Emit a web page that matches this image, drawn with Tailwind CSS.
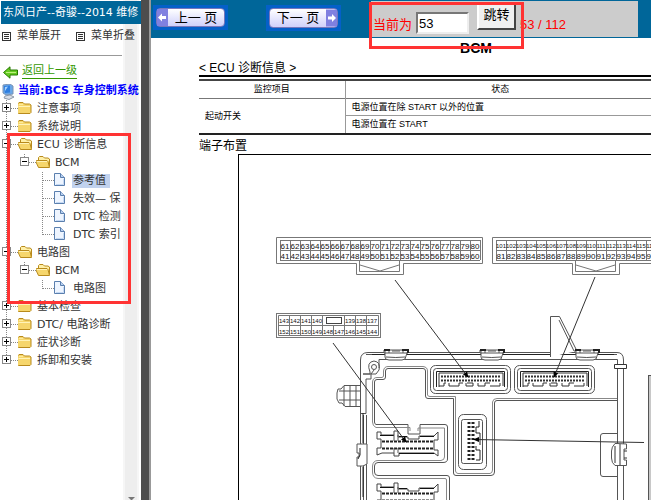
<!DOCTYPE html>
<html lang="zh-CN">
<head>
  <meta charset="UTF-8" />
  <meta name="viewport" content="width=device-width, initial-scale=1.0" />
  <title>东风日产--奇骏--2014 维修</title>
  <script src="https://cdn.jsdelivr.net/npm/@tailwindcss/browser@4"></script>
</head>
<body class="relative flex h-screen overflow-hidden bg-white font-['Liberation_Sans','Noto_Sans_CJK_SC',sans-serif] text-black">

  <!-- Shared symbols for the tree -->
  <svg class="hidden">
    <symbol id="line" viewBox="0 0 18 18"><path d="M6.5 0V18" stroke="#888" stroke-dasharray="1 1" /></symbol>
    <symbol id="tee" viewBox="0 0 18 18"><path d="M6.5 0V18M7 8.5H18" stroke="#888" stroke-dasharray="1 1" /></symbol>
    <symbol id="elbow" viewBox="0 0 18 18"><path d="M6.5 0V9M7 8.5H18" stroke="#888" stroke-dasharray="1 1" /></symbol>
    <symbol id="plus" viewBox="0 0 18 18">
      <rect x="2.5" y="3.5" width="8" height="8" fill="#fff" stroke="#888" />
      <path d="M4 7.5H9M6.5 5V10" stroke="#000" />
    </symbol>
    <symbol id="minus" viewBox="0 0 18 18">
      <rect x="2.5" y="3.5" width="8" height="8" fill="#fff" stroke="#888" />
      <path d="M4 7.5H9" stroke="#000" />
    </symbol>
    <symbol id="folder" viewBox="0 0 18 18">
      <path d="M-.5 12.5V4L1 2.5H5L6.5 4H11.5L13 5V12.5L12 13.5H.5Z" fill="#f6d66c" stroke="#b88a1c" />
      <path d="M.5 6.5H12" stroke="#fff3b8" />
      <path d="M1 4.5H5" stroke="#fdeb9c" />
    </symbol>
    <symbol id="folder-open" viewBox="0 0 18 18">
      <path d="M2.5 12.5V3.5L3.5 2.5H7L8.5 4H12L13.5 5V12.5" fill="#fff0a8" stroke="#b88a1c" />
      <path d="M-.5 7L.5 6.5H11L12 7.5L13.5 13.5H2.5Z" fill="#f6d66c" stroke="#b88a1c" />
      <path d="M1 7.5H11" stroke="#fff3b8" />
    </symbol>
    <symbol id="file" viewBox="0 0 18 18">
      <path d="M.5 1.5H6.5L10.5 5.5V13.5H.5Z" fill="#eef5ff" stroke="#5a7fae" />
      <path d="M6.5 1.5V5.5H10.5" fill="#b8d0f0" stroke="#5a7fae" />
      <path d="M2 12.5H9.5V7" fill="none" stroke="#c4d9f4" />
    </symbol>
    <symbol id="list" viewBox="0 0 9 9">
      <rect x=".5" y=".5" width="8" height="8" fill="#fff" stroke="#333" />
      <path d="M2 2.5H7M2 4.5H7M2 6.5H7" stroke="#333" />
    </symbol>
  </svg>

  <!-- Menu -->
  <aside class="relative w-[141px] shrink-0 overflow-hidden font-['DejaVu_Sans','Noto_Sans_CJK_SC',sans-serif] text-[11px] whitespace-nowrap text-[#333]">
    <div class="absolute inset-y-0 left-[123px] -z-10 w-4 border-x-2 border-[#f6f6f6] bg-[#eee]">
      <svg class="absolute bottom-0 left-[3px] h-[3px] w-[7px]" viewBox="0 0 7 3"><path d="M0 0H7L4 3H3Z" fill="#777" /></svg>
    </div>

    <h1 class="mt-px ml-px h-[23px] overflow-hidden bg-[#006699] pl-[2px] leading-[23px] text-white">东风日产--奇骏--2014 维修</h1>
    <div class="flex h-6 items-center pl-[2px]">
      <button class="flex w-[74px] items-center gap-[6px]"><svg class="size-[9px]"><use href="#list" /></svg>菜单展开</button>
      <button class="flex items-center gap-[6px]"><svg class="size-[9px]"><use href="#list" /></svg>菜单折叠</button>
    </div>
    <hr class="mt-[7px] w-[122px] border-[#999]" />

    <a href="#" class="mt-[7px] flex h-4 items-center gap-1 pl-[3px] text-[#339900]">
      <svg class="mt-[3px] h-[13px] w-[15px]" viewBox="0 0 15 13"><path d="M.5 6.5L7 .8V4H14.5V9H7V12.2Z" fill="#66cc22" stroke="#267a00" /><path d="M3 6.5H13" stroke="#bdf07c" /></svg>
      <span class="border-b border-[#339900] leading-[15px]">返回上一级</span>
    </a>
    <div class="mt-1 flex h-[17px] items-center gap-[3px] pl-[1px] font-bold text-[#0000ff]">
      <svg class="h-4 w-[14px] shrink-0" viewBox="0 0 14 16">
        <path d="M2 1L9 0L12 2V10L5 11L2 9Z" fill="#6aa7e8" stroke="#7b94b5" />
        <path d="M3 2L9 1.5V8.5L4 9Z" fill="#2f7fe0" />
        <path d="M4 3L7 2.5L4 7Z" fill="#a8d4ff" />
        <path d="M4 12L9 11L13 13L8 15.5L3 14Z" fill="#d8dde6" stroke="#8b97a8" />
      </svg>
      <span>当前:BCS 车身控制系统</span>
    </div>

    <ul id="tree" class="w-[122px] overflow-hidden"></ul>
  </aside>

  <!-- Splitter -->
  <div class="w-[10px] shrink-0 border-r-2 border-[#999] bg-[#4d4d4d]"></div>

  <main class="min-w-0 flex-1">
    <!-- Pager -->
    <form class="flex h-[38px] items-start bg-[#006699] text-[13px] text-[#ff0000]">
      <button type="button" class="mt-[5px] ml-[2px] h-[25px] w-[75px] shrink-0 border-[3px] border-[#0560c8] bg-[#0560c8]">
        <span class="flex h-[19px] items-center rounded-sm border border-[#7777bb] bg-linear-to-b from-white to-[#d0d0fa] text-[13px] text-black">
          <svg class="h-full w-[11px]" viewBox="0 0 11 17"><path d="M0 0H11V17H0Z" fill="#8080e0" /><path d="M1 8.5L5 4.5V7H9V10H5V12.5Z" fill="#fff" /></svg>
          <span class="flex-1">上一 页</span>
        </span>
      </button>
      <button type="button" class="mt-[5px] ml-[38px] h-[26px] w-[75px] shrink-0 border-[3px] border-[#0560c8] bg-[#0560c8]">
        <span class="flex h-5 items-center rounded-sm border border-[#7777bb] bg-linear-to-b from-white to-[#d0d0fa] text-[13px] text-black">
          <span class="flex-1">下一 页</span>
          <svg class="h-full w-[11px]" viewBox="0 0 11 17"><path d="M0 0H11V17H0Z" fill="#8080e0" /><path d="M10 8.5L6 4.5V7H2V10H6V12.5Z" fill="#fff" /></svg>
        </span>
      </button>
      <div class="mt-px ml-[30px] flex h-9 w-[267px] shrink-0 items-start bg-[#ccc] pl-[2px]">
        <label for="page" class="mt-[14px] leading-5">当前为</label>
        <input id="page" type="text" value="53" class="mt-[11px] ml-1 h-[22px] w-[53px] border-2 border-t-[#777] border-r-[#eee] border-b-[#eee] border-l-[#777] bg-white px-px text-black" />
        <button type="button" class="mt-[2px] ml-2 h-[27px] w-[39px] border-2 border-t-white border-r-[#444] border-b-[#444] border-l-white bg-[#f0f0f0] pb-1 leading-5 text-black">跳转</button>
        <span class="mt-[14px] ml-1 leading-5">53 / 112</span>
      </div>
    </form>

    <!-- Manual page -->
    <article class="-mr-1 pl-12">
      <h2 class="mt-px pl-[97px] text-center text-[14px] leading-[18px] font-bold"><span class="block w-[360px]">BCM</span></h2>
      <h3 class="mt-1 h-[14px] text-[12px] leading-[14px]">&lt; ECU 诊断信息 &gt;</h3>
      <div class="h-[4px] border-t-2 border-black"></div>
      <table class="w-full table-fixed border-y-2 border-t-[#444] border-b-[#222] text-[9px] leading-[17px]">
        <thead>
          <tr class="border-b border-[#777]">
            <th class="w-[146px] border-r border-[#999] font-normal">监控项目</th>
            <th class="font-normal">状态</th>
          </tr>
        </thead>
        <tbody>
          <tr>
            <td rowspan="2" class="border-r border-[#999] pl-[6px]">起动开关</td>
            <td class="border-b border-[#999] pl-[6px] leading-4">电源位置在除 START 以外的位置</td>
          </tr>
          <tr><td class="pl-[6px]">电源位置在 START</td></tr>
        </tbody>
      </table>
      <h3 class="mt-[3px] text-[12px] leading-4">端子布置</h3>

      <figure class="ml-[39px] border-t border-l border-black">
        <svg class="h-[346px] w-[440px] max-w-none" viewBox="239 155 440 346" fill="none" stroke="#555" role="img" aria-label="端子布置">
          <defs>
            <marker id="arrow" viewBox="0 0 6 6" refX="5" refY="3" markerWidth="6" markerHeight="6" orient="auto"><path d="M0 .5L6 3L0 5.5Z" fill="#000" stroke="none" /></marker>
            <g id="clip">
              <path d="M1 2V8Q1 11 5 11H18Q22 11 22 7L24 1H0V4H24M5 1V4M19 1V4M8 2H16M2 8Q12 9 21 8" fill="#fff" />
              <path d="M0 1H6M18 1H24V4" stroke="#222" stroke-width="2" />
            </g>
            <g id="socket">
              <rect x=".5" y=".5" width="80" height="28" rx="5" />
              <rect x="3.5" y="3.5" width="74" height="22" rx="3" />
              <path d="M6.500 22V6.500H74.500V22" stroke="#222" />
              <path d="M9 22V8H73V21" stroke="#333" />
              <path d="M11 11.5H71M11 15.500H71" stroke="#333" stroke-width="2" stroke-dasharray="2 1" />
              <path d="M9 21H14V18H16M19 18V21H29V18H33M36 18V21H43V18H37M48 18V21H55V18H60M60 21H70V18" stroke="#333" />
            </g>
            <g id="plug">
              <path d="M0 1H4V4H17V0H21V6H31V8H42V5H57L61 1V9H57V19H61V25L57 22H22V25H17V22H5L0 24V17H4V8H0Z" fill="#fff" stroke="#444" />
              <path d="M3 4.500H17M22 5.500H30M43 5.500H57M22 22.500H57" stroke="#111" />
              <path d="M5 10.500H57M5 17.500H57" stroke="#222" stroke-width="2" stroke-dasharray="3 1" />
              <path d="M17 4V10M21 4V10M17 17V22M21 17V22" />
            </g>
          </defs>

          <!-- Upper connectors -->
          <g stroke="#777">
            <path d="M276.5 237.5H482.5V263.5H403.5V274.5H356.5V263.5H276.5Z" />
            <path d="M359.5 260V271.5H399.5V260M360 265L380 271L399 265" />
            <path d="M660 237.5H492.5V263.5H572.5V274.5H619.5V263.5H660" />
            <path d="M575.5 260V271.5H615.5V260M576 265L596 271L615 265" />
            <rect x="276.5" y="313.5" width="104" height="24" />
          </g>
          <g id="cells" stroke="#777"></g>
          <rect x="326.5" y="317.5" width="15" height="6" stroke="#444" />
          <g id="pins" fill="#111" stroke="none" text-anchor="middle"></g>

          <!-- Housing -->
          <path d="M360.5 501V360Q360.5 352.5 368 352.5H617Q623.5 352.5 623.5 360V501" />
          <path d="M366 354.5H617M363.5 501V415M366.5 501V415M360 413.5H366V379M363 374H371L374 370M379 368V359.5H617.5V501" />
          <path d="M372 354.5H614" stroke="#222" />
          <circle cx="374" cy="367" r="2.5" />
          <path d="M363 374H370V372Q366 362 374 361Q381 362 379 370L376 374H371V379H366" />
          <path d="M550.5 357V316.5H559.5L577 351M559 320L574 351" fill="#fff" />
          <path d="M614.5 364.5H626.5V368.5H614.5Z" fill="#fff" stroke="#333" />
          <use href="#clip" x="384" y="349" />
          <use href="#clip" x="480" y="349" />
          <use href="#clip" x="575" y="349" />
          <path d="M360 385.5H344L341 389H338L337 393V399L339 403H342L345 406.5H360M344 386V406M350 386V406M356 386V406M339 391H360M339 400H360" />
          <path d="M357 444H367V464L363 466H357V457H359V453H357Z" fill="#fff" />
          <path d="M360 448V455L358 459" stroke="#222" />
          <path d="M363 413V443M363 467V497" stroke="#222" />
          <path d="M617 433.5H603Q600.5 433.5 600.5 436V474Q600.5 476.5 603 476.5H617" />
          <path d="M617 443.5H615Q611.5 447 611.5 451V458Q611.5 463 615 465.5H626.5V460H624V449H626.5V444Z" fill="#fff" />
          <path d="M615 446V463M620 444V465M624 451H627M624 458H627" stroke="#333" />

          <!-- Board contour -->
          <path d="M449.5 501V478Q449.5 475.500 447 475.500H378Q374.5 475.500 374.5 472V466Q374.5 462.5 378 462.5H443Q447.5 462.5 447.5 459V427Q447.5 424.5 445 424.5H420V434H408V424.5H376Q374.5 424 374.5 422V382Q374.5 379.5 377 379.5H383Q385.5 379.5 385.5 377V371Q385.5 368.5 388 368.5H423Q425.5 368.5 425.5 371V396Q425.5 398.5 428 398.5H453.5V473Q453.5 475.5 456 475.5H491Q494.5 475.5 494.5 472V403Q494.5 400.5 497 400.5H617" />
          <path d="M446.500 501V480Q446.500 478.500 445 478.500H378Q372.500 478 372.500 472V466Q373 460.500 378 460.500H441Q444.500 460 444.500 457V428H418V431M410 431V427.500H376Q372.500 426 372.500 422V382Q373 377.500 377 377.500H382Q383.500 377 383.500 376V371Q384 366.500 388 366.500H423Q427.500 367 427.500 371V395Q428 396.500 430 396.500H455.500V471Q456 473.500 458 473.500H490Q492.500 473 492.500 470V402Q493 398.500 497 398.500H617" stroke="#888" />

          <!-- Sockets -->
          <use href="#socket" x="430" y="365" />
          <use href="#socket" x="514" y="365" />
          <rect x="458.5" y="414.5" width="28" height="55" rx="5" />
          <rect x="461.5" y="419.5" width="21" height="44" rx="2" />
          <path d="M479 421V427H476V433H480V445M476 446V450H480V460H476" stroke="#222" />
          <path d="M469 422V460M473 422V460" stroke="#222" stroke-width="3" stroke-dasharray="2 2" />
          <use href="#plug" x="377" y="431" />
          <use href="#plug" x="377" y="483" />
          <rect x="648.5" y="375.5" width="30" height="140" fill="#c8c8c8" />

          <!-- Leaders -->
          <g stroke="#333">
            <path d="M333 343L406 442" marker-end="url(#arrow)" />
            <path d="M395 280L468 377" marker-end="url(#arrow)" />
            <path d="M595 277L554 377" marker-end="url(#arrow)" />
            <path d="M644 442.5L474 439.5" marker-end="url(#arrow)" />
          </g>
        </svg>
      </figure>
    </article>
  </main>

  <!-- Highlight boxes -->
  <div class="pointer-events-none absolute top-[133px] left-[7px] h-[171px] w-[124px] border-3 border-[#ff3333]"></div>
  <div class="pointer-events-none absolute top-[2px] left-[369px] h-[47px] w-[155px] border-3 border-[#ff3333]"></div>

  <script>
    // each row: icons in 18px columns, then the label
    const rows = [
      ["tee+plus folder", "注意事项"],
      ["tee+plus folder", "系统说明"],
      ["tee+minus folder-open", "ECU 诊断信息"],
      ["line elbow+minus folder-open", "BCM"],
      ["line blank tee file", "参考值", true],
      ["line blank tee file", "失效— 保"],
      ["line blank tee file", "DTC 检测"],
      ["line blank elbow file", "DTC 索引"],
      ["tee+minus folder-open", "电路图"],
      ["line elbow+minus folder-open", "BCM"],
      ["line blank elbow file", "电路图"],
      ["tee+plus folder", "基本检查"],
      ["tee+plus folder", "DTC/ 电路诊断"],
      ["tee+plus folder", "症状诊断"],
      ["elbow+plus folder", "拆卸和安装"],
    ];

    const cell = (names) => {
      const uses = names.split("+").map((n) => (n === "blank" ? "" : `<use href="#${n}" />`)).join("");
      const svg = `<svg class="size-[18px] shrink-0">${uses}</svg>`;
      return names.includes("+") ? `<button class="shrink-0" aria-label="展开/折叠">${svg}</button>` : svg;
    };

    document.getElementById("tree").innerHTML = rows.map(([icons, label, selected]) => {
      const bg = selected ? "bg-[#c1d2ee] pr-1" : "";
      return `<li class="flex h-[18px] items-center">${icons.split(" ").map(cell).join("")}<a href="#" class="px-px leading-[14px] ${bg}">${label}</a></li>`;
    }).join("");

    // terminal numbers
    let cells = "";
    let pins = "";
    const text = (x, y, size, n) => { pins += `<text x="${x}" y="${y}" font-size="${size}">${n}</text>`; };
    for (const [left, top, bottom, size] of [[280, 61, 41, 8], [496, 101, 81, 6]]) {
      cells += `<path d="M${left} 240.5H${left + 200}M${left} 250.5H${left + 200}M${left} 260.5H${left + 200}" />`;
      for (let i = 0; i <= 20; i++) {
        cells += `<path d="M${left + i * 10 + 0.5} 240V260" />`;
        if (i === 20) continue;
        text(left + i * 10 + 5, size === 6 ? 248 : 249, size, top + i);
        text(left + i * 10 + 5, 259, 8, bottom + i);
      }
    }
    cells += `<path d="M278.5 315.5H378.5V335.5H278.5ZM278 325.5H378" />`;
    for (let i = 0; i < 9; i++) {
      const x = 278 + i * 11;
      if (i) cells += `<path d="M${x + 0.5} ${i === 5 ? 325 : 315}V335" />`;
      text(x + 6, 334, 6, 152 - i);
      if (i < 4) text(x + 6, 323, 6, 143 - i);
      if (i > 5) text(x + 6, 323, 6, 145 - i);
    }
    document.getElementById("cells").innerHTML = cells;
    document.getElementById("pins").innerHTML = pins;
  </script>
</body>
</html>
